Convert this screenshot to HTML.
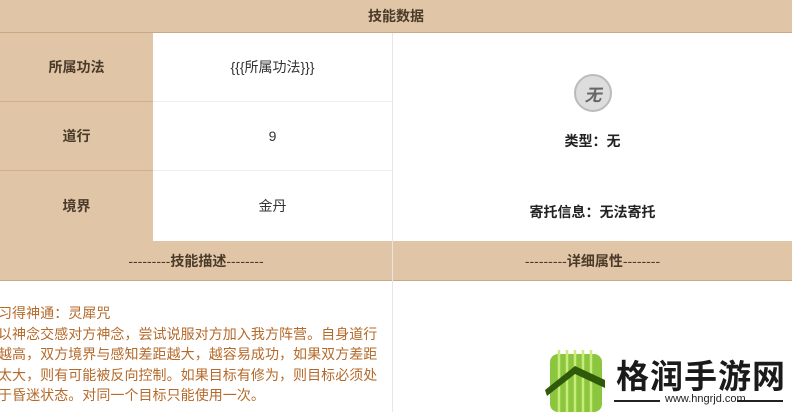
<!DOCTYPE html>
<html><head><meta charset="utf-8"><style>
body{margin:0;width:792px;height:412px;overflow:hidden;background:#fff;font-family:"Liberation Sans","Noto Sans CJK SC",sans-serif;position:relative}
.a{position:absolute;box-sizing:border-box}
.tan{background:#e0c5a7}
.c{display:flex;align-items:center;justify-content:center}
.b{font-weight:bold;color:#4a3a2a;font-size:14px}
</style></head><body>
<div class="a tan c b" style="left:0;top:0;width:792px;height:33px;border-bottom:1px solid #c9a882">技能数据</div>
<div class="a tan" style="left:0;top:33px;width:153px;height:208px"></div>
<div class="a c b" style="left:0;top:33px;width:153px;height:69px;border-bottom:1px solid #d2b08c">所属功法</div>
<div class="a c b" style="left:0;top:102px;width:153px;height:69px;border-bottom:1px solid #d2b08c">道行</div>
<div class="a c b" style="left:0;top:171px;width:153px;height:70px">境界</div>
<div class="a c" style="left:153px;top:33px;width:239px;height:69px;border-bottom:1px solid #eee;font-size:14px;color:#333">{{{所属功法}}}</div>
<div class="a c" style="left:153px;top:102px;width:239px;height:69px;border-bottom:1px solid #eee;font-size:14px;color:#333">9</div>
<div class="a c" style="left:153px;top:171px;width:239px;height:70px;font-size:14px;color:#333">金丹</div>
<div class="a" style="left:392px;top:33px;width:1px;height:379px;background:#e6e6e6"></div>
<div class="a c" style="left:574px;top:74px;width:38px;height:38px;border-radius:50%;background:#ddd;border:2px solid #bbb;font-weight:bold;color:#666;font-size:17px;font-style:italic">无</div>
<div class="a c b" style="left:393px;top:131px;width:399px;height:20px;color:#222">类型：无</div>
<div class="a c b" style="left:393px;top:202px;width:399px;height:20px;color:#222">寄托信息：无法寄托</div>
<div class="a tan c b" style="left:0;top:241px;width:392px;height:40px;border-bottom:1px solid #c9a882;font-weight:normal;color:#4a3a2a">---------<b>技能描述</b>--------</div>
<div class="a tan c b" style="left:393px;top:241px;width:399px;height:40px;border-bottom:1px solid #c9a882;font-weight:normal;color:#4a3a2a">---------<b>详细属性</b>--------</div>
<div class="a" style="left:-2px;top:303px;white-space:nowrap;font-size:14px;letter-spacing:0.05px;line-height:20.5px;color:#b56a2a">习得神通：灵犀咒<br>以神念交感对方神念，尝试说服对方加入我方阵营。自身道行<br>越高，双方境界与感知差距越大，越容易成功，如果双方差距<br>太大，则有可能被反向控制。如果目标有修为，则目标必须处<br>于昏迷状态。对同一个目标只能使用一次。</div>
<svg class="a" style="left:545px;top:350px" width="62" height="62" viewBox="0 0 62 62">
<rect x="5" y="4" width="52" height="58" rx="8" fill="#8cc63f"/>
<g stroke="#c8ec7a" stroke-width="2.5"><line x1="14" y1="0" x2="14" y2="62"/><line x1="22" y1="0" x2="22" y2="62"/><line x1="30" y1="0" x2="30" y2="62"/><line x1="38" y1="0" x2="38" y2="62"/><line x1="46" y1="0" x2="46" y2="62"/></g>
<path d="M0 40 L30 16 L60 30 L60 38 L30 24 L2 46Z" fill="#2f5a0a"/></svg>
<div class="a" style="left:616px;top:354px;font-size:33px;line-height:40px;color:#1a1a1a;font-weight:bold;white-space:nowrap;letter-spacing:1px;font-family:'Noto Sans CJK SC',sans-serif">格润手游网</div>
<div class="a" style="left:614px;top:400px;width:46px;height:2px;background:#222"></div>
<div class="a" style="left:665px;top:393px;font-size:11px;color:#222;white-space:nowrap">www.hngrjd.com</div>
<div class="a" style="left:737px;top:400px;width:46px;height:2px;background:#222"></div>
</body></html>
